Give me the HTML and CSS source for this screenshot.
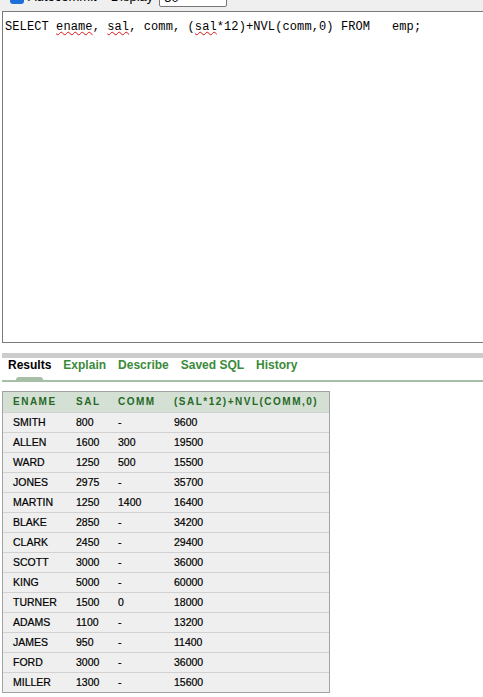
FILE: index.html
```html
<!DOCTYPE html>
<html>
<head>
<meta charset="utf-8">
<link rel="stylesheet" href="styles.css">
</head>
<body>
<div class="toolbar">
  <span class="check"></span>
  <span class="label">Autocommit</span>
  <span class="label display">Display</span>
  <span class="select">50<svg class="chev" width="10" height="6" viewBox="0 0 10 6"><path d="M1 1l4 4 4-4" fill="none" stroke="#333" stroke-width="1.3"/></svg></span>
</div>
<div class="editor"><span class="sql">SELECT <span class="sp">ename</span>, <span class="sp">sal</span>, comm, (<span class="sp">sal</span>*12)+NVL(comm,0) FROM   emp;</span></div>
<div class="divider"></div>
<div class="tabs">
  <span class="tab active">Results</span>
  <span class="tab">Explain</span>
  <span class="tab">Describe</span>
  <span class="tab">Saved SQL</span>
  <span class="tab">History</span>
</div>
<table class="results">
  <colgroup><col class="c1"><col class="c2"><col class="c3"><col class="c4"></colgroup>
  <thead>
    <tr><th>ENAME</th><th>SAL</th><th>COMM</th><th>(SAL*12)+NVL(COMM,0)</th></tr>
  </thead>
  <tbody>
    <tr><td>SMITH</td><td>800</td><td>-</td><td>9600</td></tr>
    <tr><td>ALLEN</td><td>1600</td><td>300</td><td>19500</td></tr>
    <tr><td>WARD</td><td>1250</td><td>500</td><td>15500</td></tr>
    <tr><td>JONES</td><td>2975</td><td>-</td><td>35700</td></tr>
    <tr><td>MARTIN</td><td>1250</td><td>1400</td><td>16400</td></tr>
    <tr><td>BLAKE</td><td>2850</td><td>-</td><td>34200</td></tr>
    <tr><td>CLARK</td><td>2450</td><td>-</td><td>29400</td></tr>
    <tr><td>SCOTT</td><td>3000</td><td>-</td><td>36000</td></tr>
    <tr><td>KING</td><td>5000</td><td>-</td><td>60000</td></tr>
    <tr><td>TURNER</td><td>1500</td><td>0</td><td>18000</td></tr>
    <tr><td>ADAMS</td><td>1100</td><td>-</td><td>13200</td></tr>
    <tr><td>JAMES</td><td>950</td><td>-</td><td>11400</td></tr>
    <tr><td>FORD</td><td>3000</td><td>-</td><td>36000</td></tr>
    <tr><td>MILLER</td><td>1300</td><td>-</td><td>15600</td></tr>
  </tbody>
</table>
</body>
</html>
```
FILE: styles.css
```css
html, body {
  margin: 0;
  padding: 0;
  background: #ffffff;
  overflow: hidden;
  font-family: "Liberation Sans", Arial, sans-serif;
}
body {
  width: 483px;
  height: 697px;
}
.toolbar {
  margin-top: -16px;
  padding: 3px 0 4px 10px;
  height: 20px;
  background: #efefef;
  display: flex;
  align-items: center;
  font-size: 13px;
  color: #000;
}
.check {
  width: 14px;
  height: 14px;
  border-radius: 3px;
  background: #1a6fd9;
  margin-right: 4px;
}
.label {
  line-height: 16px;
}
.display {
  margin-left: 14px;
}
.select {
  margin-left: 6px;
  width: 68px;
  height: 20px;
  box-sizing: border-box;
  border: 1px solid #767676;
  border-radius: 2px;
  background: #fff;
  display: flex;
  align-items: center;
  justify-content: space-between;
  padding: 0 6px 0 4px;
  font-size: 13px;
}
.editor {
  margin-left: 2px;
  width: 520px;
  height: 332px;
  box-sizing: border-box;
  border: 1px solid #7a7a7a;
  padding: 4px 2px;
  background: #fff;
}
.sql {
  font-family: "Liberation Mono", "DejaVu Sans Mono", monospace;
  font-size: 12px;
  letter-spacing: 0.1px;
  line-height: 14px;
  white-space: pre;
  color: #000;
}
.sp {
  text-decoration: underline wavy #e01010;
  text-decoration-thickness: 1px;
  text-underline-offset: 1px;
}
.divider {
  margin: 10px 0 0 2px;
  height: 5px;
  background: #cccccc;
}
.tabs {
  margin-left: 2px;
  padding-left: 6px;
  display: flex;
  gap: 12px;
  height: 22px;
  border-bottom: 2px solid #a6bea6;
  font-size: 12px;
  font-weight: bold;
  line-height: 14px;
}
.tab {
  color: #3a8a3a;
  position: relative;
}
.tab.active {
  color: #000;
}
.tab.active::after {
  content: "";
  position: absolute;
  left: 8px;
  top: 19px;
  width: 27px;
  height: 3px;
  border-radius: 3px 3px 0 0;
  background: #a6bea6;
}
.results {
  margin: 9px 0 0 2px;
  width: 328px;
  table-layout: fixed;
  border-collapse: separate;
  border-spacing: 0;
  border: 1px solid #a3a3a3;
}
.c1 { width: 63px; }
.c2 { width: 42px; }
.c3 { width: 56px; }
.c4 { width: 165px; }
.results th {
  background: #d4e0d4;
  color: #276827;
  font-size: 10px;
  font-weight: bold;
  letter-spacing: 1.5px;
  text-align: left;
  padding: 0 0 0 10px;
  line-height: 20px;
  white-space: nowrap;
}
.results td {
  background: #efefef;
  color: #000;
  font-size: 10.5px;
  -webkit-text-stroke: 0.2px #000;
  text-align: left;
  padding: 0 0 0 10px;
  line-height: 19px;
  border-top: 1px solid #d2d2d2;
  white-space: nowrap;
}
```
